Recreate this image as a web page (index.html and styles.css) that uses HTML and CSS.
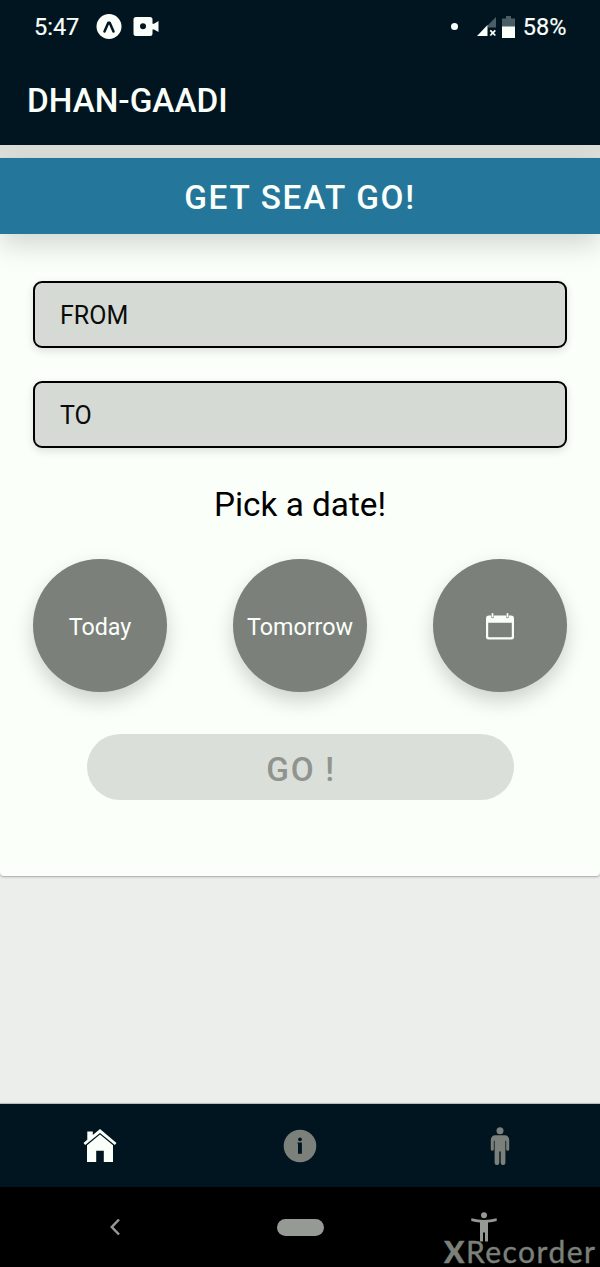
FILE: index.html
```html
<!DOCTYPE html>
<html lang="en">
<head>
<meta charset="utf-8">
<title>Dhan-Gaadi</title>
<link rel="stylesheet" href="styles.css">
</head>
<body>
<div class="screen">
  <header class="header">
    <div class="status">
      <span class="time">5:47</span>
      <svg class="app-icon" width="26" height="26" viewBox="0 0 26 26"><circle cx="13" cy="12.500" r="12.5" fill="#fafffa"/><path d="M8.500 17.500 12.300 8.800h1.400l3.800 8.700" fill="none" stroke="#001520" stroke-width="2.500" stroke-linecap="round" stroke-linejoin="round"/></svg>
      <svg class="cam-icon" width="26" height="20" viewBox="0 0 26 20"><path fill="#fafffa" fill-rule="evenodd" d="M3 0h14a2.500 2.500 0 0 1 2.500 2.500v4.200H21L25.500 4v11L21 12.500h-1.500v4A2.500 2.500 0 0 1 17 19H3a2.500 2.500 0 0 1-2.500-2.500v-14A2.500 2.500 0 0 1 3 0zm7 6.200a3 3 0 1 0 0 6 3 3 0 0 0 0-6z"/></svg>
      <span class="dot"></span>
      <svg class="signal" width="20" height="20" viewBox="0 0 20 20"><path d="M10.500 8.500 19 0v10.500h-8.500z" fill="#4b5d65"/><path d="M0 19 10.500 8v11z" fill="#fafffa"/><path d="m13.300 13.300 5 5.200m0-5.200-5 5.200" stroke="#fafffa" stroke-width="1.800"/></svg>
      <svg class="battery" width="13" height="22" viewBox="0 0 13 22"><path d="M0 11V2.500h4V0h5v2.500h4V11z" fill="#4b5d65"/><path d="M0 10.500h13V22H0z" fill="#fafffa"/></svg>
      <span class="percent">58%</span>
    </div>
    <h1 class="title">DHAN-GAADI</h1>
  </header>

  <main class="content">
    <section class="card">
      <h2 class="banner">GET SEAT GO!</h2>
      <div class="form">
        <div class="field">FROM</div>
        <div class="field">TO</div>
        <p class="pick">Pick a date!</p>
        <div class="dates">
          <div class="date">Today</div>
          <div class="date">Tomorrow</div>
          <div class="date">
            <svg width="28" height="27" viewBox="0 0 28 27"><path fill="#fafffa" fill-rule="evenodd" d="M3 2.500h2.200V4a1.300 1.300 0 0 0 2.600 0V2.500h12.400V4a1.300 1.300 0 0 0 2.600 0V2.500H25a3 3 0 0 1 3 3V24a2.500 2.500 0 0 1-2.500 2.500h-23A2.500 2.500 0 0 1 0 24V5.500a3 3 0 0 1 3-3zM2.200 9.800v13.500a1 1 0 0 0 1 1h21.600a1 1 0 0 0 1-1V9.800z"/><path d="M6.500 1v2.500m15-2.500v2.500" stroke="#fafffa" stroke-width="1.800" stroke-linecap="round"/></svg>
          </div>
        </div>
        <div class="go">GO !</div>
      </div>
    </section>
  </main>

  <nav class="tabs">
    <div class="tab"><svg width="34" height="36" viewBox="0 0 34 36"><path fill="#fafffa" d="M17 1 9.800 7.100V3.500H4.300v8.300L.5 15l1.700 2.100L17 4.900l14.800 12.200 1.700-2.100z"/><path fill="#fafffa" d="M17 6.600 4 17.300V34h9.200V22.800h7.600V34H30V17.300z"/></svg></div>
    <div class="tab"><svg width="34" height="34" viewBox="0 0 34 34"><circle cx="17" cy="17" r="16.300" fill="#7c807a"/><circle cx="17" cy="10.300" r="1.900" fill="#001520"/><path fill="#001520" d="M15 13.500h3.900v11.300H15V14.500h-.6v-1z"/></svg></div>
    <div class="tab"><svg width="20" height="38" viewBox="0 0 20 38"><g fill="#7c807a"><circle cx="10" cy="3.700" r="3.500"/><path d="M5.300 8.200h9.400a4.500 4.500 0 0 1 4.500 4.500v9.500a1.500 1.500 0 0 1-3 0v-8.500h-.8v22a2 2 0 0 1-4.700 0V24.500H9.300v11.200a2 2 0 0 1-4.700 0v-22h-.8v8.500a1.500 1.500 0 0 1-3 0v-9.500a4.500 4.500 0 0 1 4.500-4.500z"/></g></svg></div>
  </nav>

  <footer class="system">
    <svg class="back" width="10" height="18" viewBox="0 0 10 18"><path d="M9 1.500 1.800 9 9 16.500" fill="none" stroke="#969a94" stroke-width="2.500"/></svg>
    <span class="home-pill"></span>
    <svg class="person" width="26" height="30" viewBox="0 0 26 30"><g fill="#969a94"><circle cx="13" cy="3.300" r="3"/><path d="M.3 6.200Q13 9.600 25.700 6.200V9Q21 10.200 17 10.500V29.500h-3v-9h-2v9H9v-19Q5 10.200.3 9z"/></g></svg>
    <div class="recorder"><b>X</b>Recorder</div>
  </footer>
</div>
</body>
</html>
```

FILE: styles.css
```css
* { box-sizing: border-box; }
body { margin: 0; font-family: Roboto, sans-serif; background: #000; }
.screen { width: 600px; height: 1267px; display: flex; flex-direction: column; overflow: hidden; }
.header { height: 145px; background: #001520; color: #fafffa; position: relative; z-index: 1; }
.status { height: 54px; padding: 0 33.500px 0 34px; display: flex; align-items: center; font-size: 23.5px; -webkit-text-stroke: .2px #fafffa; }
.time { width: 62px; }
.app-icon { margin-right: 11px; }
.cam-icon { margin-right: auto; }
.dot { width: 7px; height: 7px; border-radius: 50%; background: #fafffa; margin: -2px 19px 0 0; }
.signal { margin: 0 5px 0 0; }
.battery { margin-right: 8px; }
.title { margin: 0; padding: 27px 0 0 27px; font-size: 33.3px; line-height: 40px; font-weight: 500; }
.content { height: 959px; padding-top: 13px; background: linear-gradient(#d9dcd7 0, #e0e2dd 13px, #ebeeea 14px); }
.card { height: 718px; background: #fafffa; border-radius: 0 0 4px 4px; box-shadow: 0 1px 2px rgba(0, 0, 0, .3); }
.banner { margin: 0; height: 75.500px; background: #24779a; color: #fafffa; text-align: center; font-size: 33.3px; line-height: 80px; font-weight: 500; letter-spacing: 1.730px; box-shadow: 0 10px 28px rgba(0, 0, 0, .17); }
.form { padding: 47px 33px 0; display: flex; flex-direction: column; }
.field { height: 67px; margin-bottom: 33px; padding-left: 25px; border: 2px solid #000; border-radius: 9px; background: #d6dad5; color: #0a0c0a; font-size: 25px; line-height: 66px; box-shadow: 0 3px 8px rgba(0, 0, 0, .12); position: relative; }
.pick { margin: 4px 0 34px; height: 40px; text-align: center; font-size: 33.3px; line-height: 40px; color: #000; }
.dates { display: flex; justify-content: space-between; }
.date { width: 134px; height: 133.500px; border-radius: 50%; background: #7c807a; color: #fafffa; display: flex; align-items: center; justify-content: center; font-size: 23.3px; padding-top: 3px; box-shadow: 0 9px 20px rgba(0, 0, 0, .18); }
.date svg { margin-top: -1px; }
.go { width: 427px; height: 66px; margin: 42px auto 0; border-radius: 33px; background: #dbdfda; color: #8f948e; text-align: center; font-size: 33.3px; line-height: 71px; font-weight: 500; letter-spacing: 1.670px; padding-left: 2px; }
.tabs { height: 83px; display: grid; grid-template-columns: repeat(3, 1fr); background: #001520; box-shadow: 0 -1px 1px rgba(0, 0, 0, .2); position: relative; }
.tab { display: flex; align-items: center; justify-content: center; }
.system { height: 80px; background: #000; position: relative; display: flex; align-items: center; }
.back { margin-left: 110px; }
.home-pill { width: 47px; height: 17px; border-radius: 9px; background: #969a94; margin-left: 157px; }
.person { margin-left: 147px; }
.recorder { position: absolute; left: 444px; top: 49px; font: 30px/30px Lato, sans-serif; letter-spacing: 1.500px; color: #7c807a; white-space: nowrap; -webkit-text-stroke: .4px #7c807a; }
.recorder b { font-weight: 900; }
```
